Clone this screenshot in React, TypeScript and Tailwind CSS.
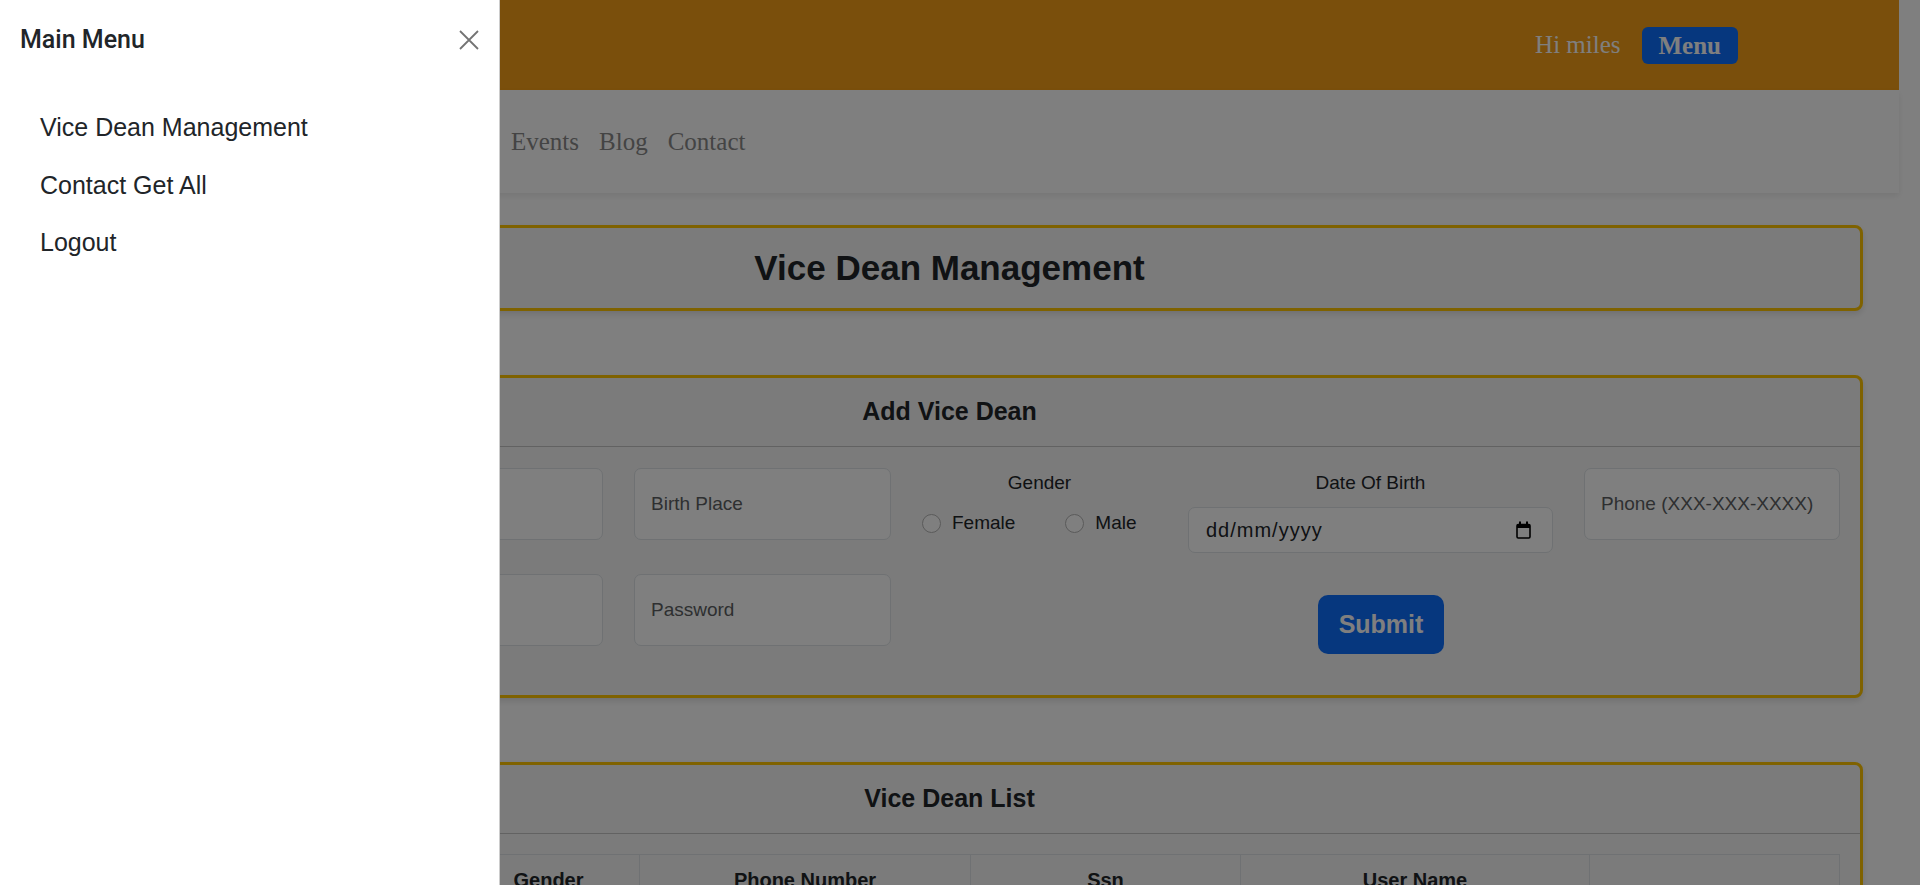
import React from "react";

const sans = "font-['Liberation_Sans',Arial,sans-serif]";
const serif = "font-['Liberation_Serif','Times_New_Roman',serif]";

function FloatingInput({ label, width }: { label: string; width: string }) {
    return (
        <div className={`${width} h-[72px] shrink-0 rounded-[7px] border border-[#dee2e6] bg-white flex items-center pl-[16px]`}>
            <span className="text-[19px] text-[#5c5f62] whitespace-nowrap">{label}</span>
        </div>
    );
}

function Radio({ label }: { label: string }) {
    return (
        <div className="flex items-center">
            <span className="w-[19px] h-[19px] rounded-full border-[1.5px] border-[#b5b5b5] bg-white" />
            <span className="ml-[11px] text-[19px] text-[#212529]">{label}</span>
        </div>
    );
}

function CalendarIcon() {
    return (
        <svg width="15" height="18" viewBox="0 0 15 18" className="mr-[4px]">
            <rect x="1" y="3.5" width="13" height="13.5" rx="1.2" fill="none" stroke="#000" strokeWidth="1.6" />
            <rect x="1" y="3.5" width="13" height="3.5" fill="#000" />
            <rect x="3" y="0.5" width="2" height="3.5" fill="#000" />
            <rect x="10" y="0.5" width="2" height="3.5" fill="#000" />
        </svg>
    );
}

function Card({ title, children }: { title: string; children: React.ReactNode }) {
    return (
        <div className="mx-[36px] mt-[64px] rounded-[8px] border-[3px] border-[#ffc400] bg-[#f6f6f6] shadow-[0_3px_6px_rgba(0,0,0,0.12)]">
            <div className="h-[69px] flex items-center justify-center border-b border-black/20">
                <h5 className="text-[25px] font-bold text-[#212529]">{title}</h5>
            </div>
            {children}
        </div>
    );
}

export default function App() {
    const headers = ["", "", "Gender", "Phone Number", "Ssn", "User Name", ""];

    return (
        <div className={`${sans} relative w-[1920px] h-[885px] overflow-hidden bg-white`}>
            {/* page behind the offcanvas */}
            <div className="w-[1899px]">
                <header className="h-[90px] bg-[#f49e18] flex items-center justify-end gap-[21px] pr-[161px]">
                    <span className={`${serif} text-[25px] text-white`}>Hi miles</span>
                    <button className={`${serif} h-[37px] px-[17px] rounded-[6px] bg-[#0d6efd] text-white text-[25px] font-bold leading-none`}>
                        Menu
                    </button>
                </header>
                <nav className={`${serif} h-[103px] bg-white shadow-[0_3px_6px_rgba(0,0,0,0.08)] flex items-center gap-[20px] pl-[511px] text-[25px] text-[#888]`}>
                    <a>Events</a>
                    <a>Blog</a>
                    <a>Contact</a>
                </nav>

                <div className="mx-[36px] mt-[32px] h-[86px] rounded-[8px] border-[3px] border-[#ffc400] bg-[#f6f6f6] shadow-[0_3px_6px_rgba(0,0,0,0.12)] flex items-center justify-center">
                    <h3 className="text-[35px] font-bold text-[#212529]">Vice Dean Management</h3>
                </div>

                <Card title="Add Vice Dean">
                    <div className="px-[20px] pt-[21px] pb-[41px]">
                        <div className="flex items-start gap-[31px] h-[72px]">
                            <FloatingInput label="" width="w-[257px]" />
                            <FloatingInput label="" width="w-[256px]" />
                            <FloatingInput label="Birth Place" width="w-[257px]" />
                            <div className="w-[235px] shrink-0 flex flex-col items-center">
                                <span className="text-[19px] leading-[30px] text-[#212529]">Gender</span>
                                <div className="mt-[10px] h-[30px] w-full flex items-center gap-[50px]">
                                    <Radio label="Female" />
                                    <Radio label="Male" />
                                </div>
                            </div>
                            <div className="w-[365px] shrink-0 flex flex-col">
                                <span className="text-[19px] leading-[30px] text-center text-[#212529]">Date Of Birth</span>
                                <div className="mt-[9px] h-[46px] rounded-[7px] border border-[#dee2e6] bg-white flex items-center justify-between px-[17px]">
                                    <span className="text-[20px] tracking-[1px] text-[#212529]">dd/mm/yyyy</span>
                                    <CalendarIcon />
                                </div>
                            </div>
                            <FloatingInput label="Phone (XXX-XXX-XXXX)" width="w-[256px]" />
                        </div>
                        <div className="flex items-start gap-[31px] mt-[34px]">
                            <FloatingInput label="" width="w-[257px]" />
                            <FloatingInput label="" width="w-[256px]" />
                            <FloatingInput label="Password" width="w-[257px]" />
                            <div className="flex-1 flex justify-center">
                                <button className="mt-[21px] h-[59px] px-[21px] rounded-[10px] bg-[#0d6efd] text-white text-[25px] font-bold">
                                    Submit
                                </button>
                            </div>
                        </div>
                    </div>
                </Card>

                <Card title="Vice Dean List">
                    <div className="px-[20px] pt-[20px] pb-[40px]">
                        <div className="grid grid-cols-[199px_199px_182px_331px_270px_349px_251px] border-t border-r border-[#dee2e6]">
                            {headers.map((h, i) => (
                                <div
                                    key={i}
                                    className="border-l border-b border-[#dee2e6] py-[10px] text-center text-[20px] leading-[30px] font-bold text-[#212529]"
                                >
                                    {h || "\u00a0"}
                                </div>
                            ))}
                        </div>
                    </div>
                </Card>
            </div>

            {/* backdrop */}
            <div className="absolute inset-0 bg-black/50 z-10" />

            {/* offcanvas */}
            <aside className="absolute left-0 top-0 z-20 h-full w-[500px] bg-white border-r border-black/20 flex flex-col">
                <div className="h-[79px] px-[20px] flex items-center justify-between">
                    <h5 className="font-['Roboto',sans-serif] text-[25px] font-medium text-[#212529]">Main Menu</h5>
                    <svg width="20" height="20" viewBox="0 0 20 20">
                        <path d="M1 1L19 19M19 1L1 19" stroke="#000" strokeOpacity="0.55" strokeWidth="1.8" />
                    </svg>
                </div>
                <div className="px-[20px] pt-[20px]">
                    {["Vice Dean Management", "Contact Get All", "Logout"].map((item) => (
                        <a key={item} className="block px-[20px] py-[10px] text-[25px] leading-[37.5px] text-[#212529]">
                            {item}
                        </a>
                    ))}
                </div>
            </aside>
        </div>
    );
}
